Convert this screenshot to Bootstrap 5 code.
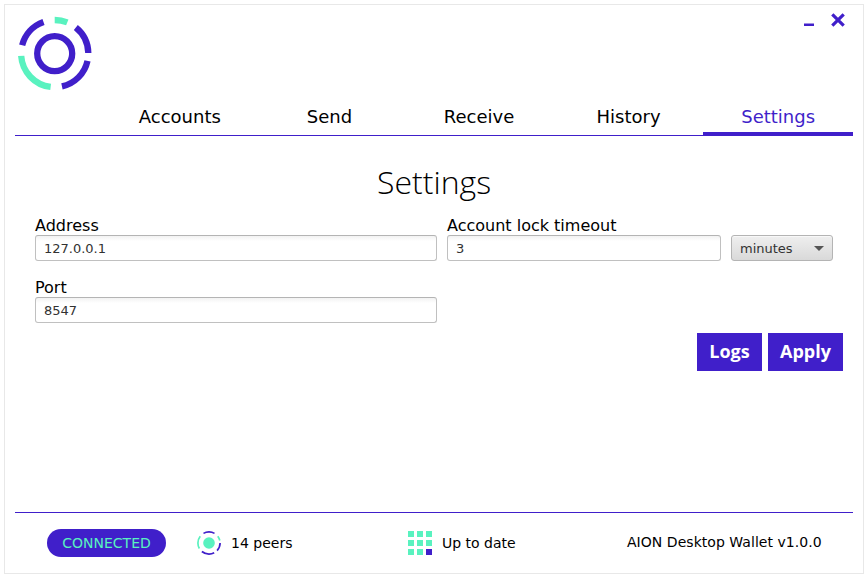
<!DOCTYPE html>
<html lang="en">
<head>
<meta charset="utf-8">
<meta name="viewport" content="width=device-width, initial-scale=1">
<title>AION Desktop Wallet</title>
<link href="https://cdn.jsdelivr.net/npm/bootstrap@5.3.0/dist/css/bootstrap.min.css" rel="stylesheet">
<style>
  :root { --aion: #401fca; --mint: #59f2bf; }
  body { font-family: "DejaVu Sans", sans-serif; color: #000; line-height: 1.2; background: #fff; }
  .wallet { width: 860px; height: 570px; margin: 4px; border: 1px solid #e8e8e8; padding: 0 10px; }
  .top-bar { height: 93px; padding: 8px 8px 0 1px; }
  .brand-mark { margin-top: 3px; }
  .win-btn { border: 0; background: none; padding: 0; line-height: 0; }
  .win-controls { gap: 17px; }
  .main-tabs { height: 38px; border-bottom: 1px solid var(--aion); padding-left: 90px; font-size: 18px; --bs-nav-link-color: #000; --bs-nav-link-hover-color: var(--aion); }
  .main-tabs .nav-link { height: 37px; padding: 8px 0 0; line-height: 21px; font-size: 18px; border-bottom: 3px solid transparent; }
  .main-tabs .nav-link.active { color: var(--aion); border-bottom-color: var(--aion); }
  .page-title { font: 300 32px/45px "Open Sans", sans-serif; margin: 23px 0 11px; }
  .settings-form { padding: 0 20px; }
  .field-row { gap: 10px; }
  .settings-form .form-label { display: block; font-size: 16px; line-height: 21px; height: 20px; margin: 0; }
  .settings-form .form-control, .settings-form .form-select { height: 26px; min-height: 26px; font-size: 13px; line-height: 16px; color: #323232; border: 1px solid #c0c0c0; border-top-color: #b4b4b4; border-radius: 3px; padding: 4px 8px; }
  .settings-form .form-control { background: linear-gradient(#f2f2f2, #fff 5px); }
  .settings-form .form-select { width: 102px; border-color: #b4b4b4; background: linear-gradient(#efefef, #d9d9d9); box-shadow: inset 0 1px #f8f8f8; padding-top: 5px; padding-bottom: 3px; }
  .col-left { width: 402px; }
  .col-timeout { width: 274px; }
  .caret-down { width: 10px; height: 5px; margin-bottom: 1px; background: #555; clip-path: polygon(0 0, 100% 0, 50% 100%); }
  .actions { gap: 6px; padding: 10px 10px 0 0; }
  .btn-aion { --bs-btn-color: #fff; --bs-btn-bg: var(--aion); --bs-btn-hover-color: #fff; --bs-btn-hover-bg: #3519ab; height: 38px; padding: 0 0 2px; border: 0; border-radius: 0; font: 700 18px/36px "Open Sans", sans-serif; }
  .btn-logs { width: 65px; }
  .btn-apply { width: 75px; }
  .status-bar { height: 61px; border-top: 1px solid var(--aion); font-size: 14px; padding-left: 32px; }
  .status-pill { width: 119px; height: 28px; font-size: 14px; font-weight: 400; line-height: 28px; padding: 0; background: var(--aion); color: var(--mint); }
  .peers { width: 211px; margin-left: 31px; gap: 10px; }
  .sync { width: 219px; gap: 10px; }
  .version { padding-bottom: 2px; letter-spacing: .04px; }
</style>
</head>
<body>
<div class="wallet d-flex flex-column">
  <header class="top-bar d-flex justify-content-between align-items-start">
    <svg class="brand-mark" width="76" height="76" viewBox="16.3 16 76 76" fill="none" stroke-width="6.3" aria-label="AION" role="img">
      <circle cx="55" cy="53.6" r="17.5" stroke="#401fca"/>
      <g transform="rotate(-90 55 53.6)">
        <circle cx="55" cy="53.6" r="33.6" pathLength="360" stroke="#59f2bf" stroke-dasharray="22 165 79 94"/>
        <circle cx="55" cy="53.6" r="33.6" pathLength="360" stroke="#401fca" stroke-dasharray="0 39 50 13.5 65 117 56 19.5"/>
      </g>
    </svg>
    <div class="win-controls d-flex">
      <button class="win-btn" aria-label="Minimize"><svg width="10" height="14" viewBox="0 0 10 14"><path d="M0 10.5h10V13H0z" fill="#401fca"/></svg></button>
      <button class="win-btn" aria-label="Close"><svg width="14" height="14" viewBox="0 0 14 14"><path d="M1.3 1.3l11.4 11.4M12.7 1.3L1.3 12.7" stroke="#401fca" stroke-width="3.2"/></svg></button>
    </div>
  </header>

  <ul class="main-tabs nav nav-fill flex-nowrap">
    <li class="nav-item w-100"><a class="nav-link" href="#">Accounts</a></li>
    <li class="nav-item w-100"><a class="nav-link" href="#">Send</a></li>
    <li class="nav-item w-100"><a class="nav-link" href="#">Receive</a></li>
    <li class="nav-item w-100"><a class="nav-link" href="#">History</a></li>
    <li class="nav-item w-100"><a class="nav-link active" aria-current="page" href="#">Settings</a></li>
  </ul>

  <main class="flex-grow-1">
    <h1 class="page-title text-center">Settings</h1>
    <form class="settings-form">
      <div class="field-row d-flex align-items-end">
        <div class="col-left">
          <label class="form-label" for="address">Address</label>
          <input class="form-control" id="address" type="text" value="127.0.0.1">
        </div>
        <div class="col-timeout">
          <label class="form-label" for="timeout">Account lock timeout</label>
          <input class="form-control" id="timeout" type="text" value="3">
        </div>
        <button type="button" class="form-select d-flex align-items-center justify-content-between">
          <span>minutes</span><span class="caret-down"></span>
        </button>
      </div>
      <div class="col-left mt-3">
        <label class="form-label" for="port">Port</label>
        <input class="form-control" id="port" type="text" value="8547">
      </div>
    </form>
    <div class="actions d-flex justify-content-end">
      <button class="btn btn-aion btn-logs">Logs</button>
      <button class="btn btn-aion btn-apply">Apply</button>
    </div>
  </main>

  <footer class="status-bar d-flex align-items-center">
    <span class="status-pill badge rounded-pill">CONNECTED</span>
    <div class="peers d-flex align-items-center">
      <svg width="24" height="24" viewBox="0 0 24 24" fill="none" stroke-width="1.7">
        <circle cx="12" cy="12" r="5.8" fill="#59f2bf"/>
        <g transform="rotate(-90 12 12)">
          <circle cx="12" cy="12" r="11.1" pathLength="360" stroke="#401fca" stroke-dasharray="30 60 43 19 68 110 30 0"/>
          <circle cx="12" cy="12" r="11.1" pathLength="360" stroke="#59f2bf" stroke-dasharray="0 52 25 163 68 52"/>
        </g>
      </svg>
      <span>14 peers</span>
    </div>
    <div class="sync d-flex align-items-center">
      <svg width="24" height="24" viewBox="0 0 24 24" fill="#59f2bf">
        <path d="M0 0h6v6H0zM9 0h6v6H9zM18 0h6v6h-6zM0 9h6v6H0zM9 9h6v6H9zM18 9h6v6h-6zM0 18h6v6H0zM9 18h6v6H9z"/>
        <path d="M18 18h6v6h-6z" fill="#401fca"/>
      </svg>
      <span>Up to date</span>
    </div>
    <span class="version">AION Desktop Wallet v1.0.0</span>
  </footer>
</div>
<script src="https://cdn.jsdelivr.net/npm/bootstrap@5.3.0/dist/js/bootstrap.bundle.min.js"></script>
</body>
</html>
